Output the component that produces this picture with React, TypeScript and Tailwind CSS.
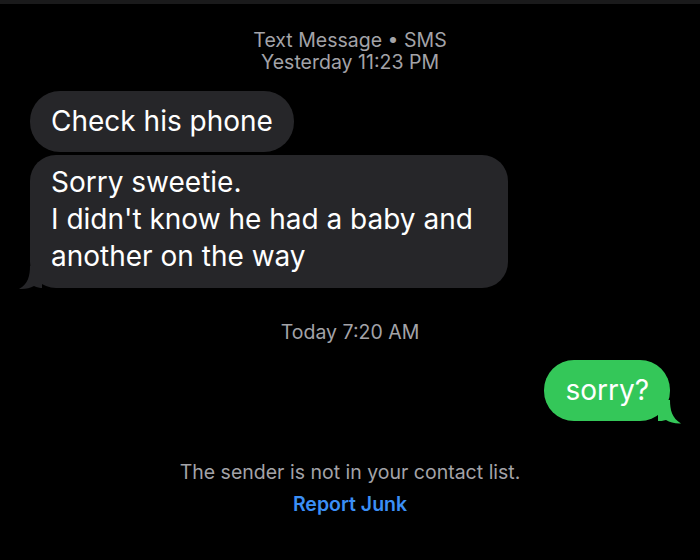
import React from "react";

const font = { fontFamily: "Inter, 'Noto Sans', 'Liberation Sans', sans-serif" };

function LeftTail() {
  return (
    <svg
      className="absolute left-[-12px] bottom-[-2px]"
      width="24"
      height="24"
      viewBox="0 0 24 24"
    >
      <path d="M24 0 L12 0 C12 10 10 18 1 23 C7 23.5 12 22 16 20 C19 21.5 22 22 24 22 Z" fill="#262629" />
    </svg>
  );
}

function RightTail() {
  return (
    <svg
      className="absolute right-[-12px] bottom-[-3px]"
      width="24"
      height="24"
      viewBox="0 0 24 24"
    >
      <path d="M0 0 L12 0 C12 10 14 18 23 23.5 C17 23.8 12 22.5 8 20 C5 21 2 21 0 21 Z" fill="#34c759" />
    </svg>
  );
}

export default function App() {
  return (
    <div
      className="w-[700px] h-[560px] bg-black border-t-4 border-[#1a1a1b] overflow-hidden flex flex-col"
      style={font}
    >
      <div className="flex flex-col items-center pt-[25px] text-[19.5px] leading-[22px] text-[#a3a3a8]">
        <div>Text Message • SMS</div>
        <div>Yesterday 11:23 PM</div>
      </div>

      <div className="flex flex-col items-start pl-[30px] mt-[18px] gap-[3px]">
        <div className="h-[61px] rounded-[30px] bg-[#262629] text-white text-[28px] leading-[61px] px-[21px]">
          Check his phone
        </div>
        <div className="relative w-[478px] h-[133px] rounded-[26px] bg-[#262629] text-white text-[28px] leading-[37px] px-[21px] pt-[9px]">
          <div>Sorry sweetie.</div>
          <div>I didn't know he had a baby and another on the way</div>
          <LeftTail />
        </div>
      </div>

      <div className="text-center text-[19.5px] leading-[22px] text-[#a3a3a8] mt-[33px]">
        Today 7:20 AM
      </div>

      <div className="flex justify-end pr-[30px] mt-[17px]">
        <div className="relative h-[61px] rounded-[30px] bg-[#34c759] text-white text-[28px] leading-[61px] px-[21px]">
          sorry?
          <RightTail />
        </div>
      </div>

      <div className="text-center text-[19.5px] leading-[22px] text-[#a3a3a8] mt-[40px]">
        The sender is not in your contact list.
      </div>
      <div className="text-center text-[19.5px] leading-[22px] text-[#3b8ff6] font-semibold mt-[10px]">
        Report Junk
      </div>
    </div>
  );
}
